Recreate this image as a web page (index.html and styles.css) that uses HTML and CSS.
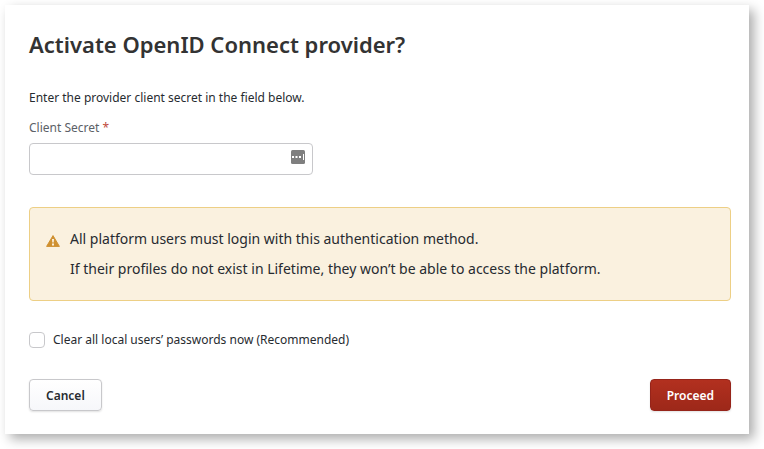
FILE: index.html
```html
<!DOCTYPE html>
<html lang="en">
<head>
<meta charset="utf-8">
<title>Activate OpenID Connect provider?</title>
<link rel="stylesheet" href="styles.css">
</head>
<body>
<main class="dialog">
  <h1 class="title">Activate OpenID Connect provider?</h1>
  <p class="intro">Enter the provider client secret in the field below.</p>
  <label class="label" for="secret">Client Secret <span class="required">*</span></label>
  <div class="field">
    <input class="input" id="secret" type="password">
    <svg class="key-icon" width="14" height="14" viewBox="0 0 14 14"><rect width="14" height="14" rx="1.5" fill="#7f7f7f"/><path d="M1 6h2v2H1zM4.5 6h2v2h-2zM8 6h2v2H8zM12 4h1v6h-1z" fill="#fff"/></svg>
  </div>
  <section class="warning">
    <svg class="warning-icon" width="14" height="12" viewBox="0 0 14 12"><path d="M7 .6 13.4 11.4H.6z" fill="#cf9131" stroke="#cf9131" stroke-linejoin="round"/><path d="M6 4h2l-.3 3.5H6.3zM6 8.5h2v2H6z" fill="#faf1df"/></svg>
    <div class="warning-text">
      <p>All platform users must login with this authentication method.</p>
      <p>If their profiles do not exist in Lifetime, they won’t be able to access the platform.</p>
    </div>
  </section>
  <label class="check"><input class="checkbox" type="checkbox"><span>Clear all local users’ passwords now (Recommended)</span></label>
  <footer class="actions">
    <button class="button">Cancel</button>
    <button class="button primary">Proceed</button>
  </footer>
</main>
</body>
</html>
```

FILE: styles.css
```css
* { box-sizing: border-box; }
body { min-height: 100vh; margin: 0; padding: 5px; background: #fff; color: #272b30; font: 12px/18px "Noto Sans", sans-serif; }
p { margin: 0; }
.dialog { width: 744px; height: 429px; padding: 23px 18px 0 24px; background: #fff; box-shadow: 5px 5px 11px rgba(0,0,0,.33); }
.title { margin: 0; color: #333; font-size: 22px; line-height: 32px; font-weight: 600; }
.intro { margin-top: 29px; }
.label { display: block; margin-top: 12px; color: #5b6167; }
.required { color: #c04a3c; }
.field { position: relative; width: 284px; height: 32px; margin-top: 6px; }
.input { display: block; width: 100%; height: 100%; margin: 0; padding: 0 30px 0 8px; border: 1px solid #c8c8cb; border-radius: 4px; background: #fff; }
.key-icon { position: absolute; top: 7px; right: 8px; }
.warning { display: flex; height: 94px; margin-top: 32px; padding: 16px; border: 1px solid #edcf85; border-radius: 4px; background: #faf1df; font-size: 14px; line-height: 30px; }
.warning-icon { flex: none; margin: 11px 10px 0 0; }
.check { display: flex; align-items: center; gap: 8px; height: 18px; margin-top: 30px; }
.checkbox { appearance: none; width: 16px; height: 16px; margin: 0; border: 1px solid #c8c8cb; border-radius: 4px; background: #fff; }
.actions { display: flex; justify-content: space-between; margin-top: 30px; }
.button { height: 32px; padding: 2px 16px 0; border: 1px solid #c8c8cb; border-radius: 4px; background: linear-gradient(#fff, #f6f7fa); box-shadow: 0 1px 2px rgba(0,0,0,.12); color: #272b30; font: 600 12px/18px "Noto Sans", sans-serif; }
.primary { border-color: #96241a; background: linear-gradient(#b2301f, #9d2819); color: #fff; }
```
